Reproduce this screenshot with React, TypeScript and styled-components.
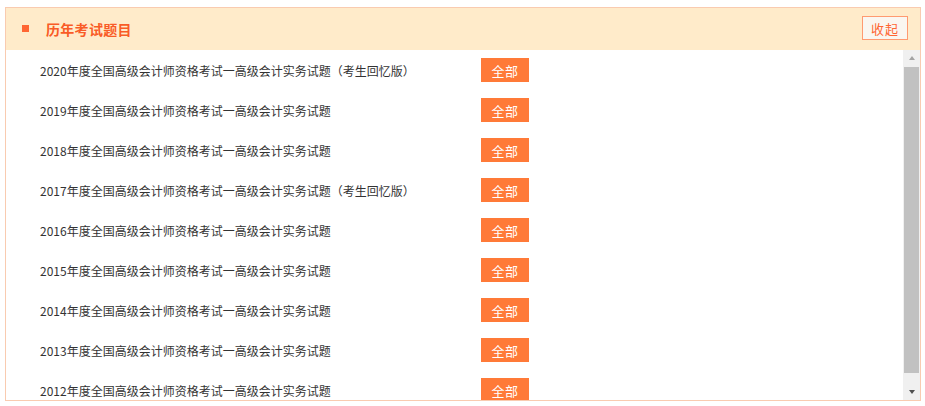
import React from "react";
import styled, { createGlobalStyle } from "styled-components";

const Global = createGlobalStyle`
  html, body { margin: 0; padding: 0; background: #fff; }
  body { font-family: "Noto Sans CJK SC", "Liberation Sans", sans-serif; }
`;

const Page = styled.div`
  padding: 7px 4px 0 5px;
`;

const Panel = styled.section`
  width: 914px;
  height: 392px;
  border: 1px solid #f9cbb0;
  display: flex;
  flex-direction: column;
  background: #fff;
`;

const Header = styled.header`
  height: 42px;
  flex: none;
  background: #ffebca;
  display: flex;
  align-items: center;
  padding: 0 12px 0 16px;
`;

const Marker = styled.span`
  width: 7px;
  height: 7px;
  background: #ff6633;
  margin-right: 17px;
  margin-top: -1px;
`;

const Title = styled.h2`
  margin: 0;
  font-size: 14px;
  font-weight: bold;
  color: #f95b26;
  flex: 1;
  letter-spacing: 0.3px;
`;

const CollapseButton = styled.button`
  width: 46px;
  height: 24px;
  border: 1px solid #ff9a70;
  background: #faf6f0;
  color: #ff6633;
  font-family: inherit;
  font-size: 13px;
  padding: 0;
  cursor: pointer;
  margin-top: -2px;
  letter-spacing: 1px;
`;

const Body = styled.div`
  flex: 1;
  display: flex;
  min-height: 0;
`;

const List = styled.ul`
  list-style: none;
  margin: 0;
  padding: 0;
  flex: 1;
  overflow: hidden;
`;

const Row = styled.li`
  height: 40px;
  display: flex;
  align-items: center;
  padding-left: 34px;
`;

const Name = styled.span`
  width: 441px;
  flex: none;
  font-size: 12px;
  color: #333;
  white-space: nowrap;
`;

const AllButton = styled.a`
  width: 48px;
  height: 24px;
  background: #ff7a38;
  color: #fff;
  font-size: 13px;
  display: flex;
  align-items: center;
  justify-content: center;
  text-decoration: none;
  letter-spacing: 0.5px;
  cursor: pointer;
`;

const ScrollBar = styled.div`
  width: 17px;
  flex: none;
  background: #f0f0f0;
  display: flex;
  flex-direction: column;
  align-items: center;
`;

const ArrowButton = styled.div<{ $down?: boolean }>`
  height: 17px;
  width: 17px;
  flex: none;
  display: flex;
  align-items: center;
  justify-content: center;
  margin-top: ${(p) => (p.$down ? "auto" : "0")};

  &::before {
    content: "";
    width: 0;
    height: 0;
    border-left: 3.5px solid transparent;
    border-right: 3.5px solid transparent;
    ${(p) =>
      p.$down
        ? "border-top: 4px solid #505050; margin-top: 0px;"
        : "border-bottom: 4px solid #a3a3a3; margin-top: -2px;"}
  }
`;

const Thumb = styled.div`
  width: 15px;
  height: 306px;
  flex: none;
  background: #c1c1c1;
`;

const base = "年度全国高级会计师资格考试一高级会计实务试题";
const items = [
  { year: 2020, memo: true },
  { year: 2019, memo: false },
  { year: 2018, memo: false },
  { year: 2017, memo: true },
  { year: 2016, memo: false },
  { year: 2015, memo: false },
  { year: 2014, memo: false },
  { year: 2013, memo: false },
  { year: 2012, memo: false },
];

export default function App() {
  return (
    <>
      <Global />
      <Page>
        <Panel>
          <Header>
            <Marker />
            <Title>历年考试题目</Title>
            <CollapseButton>收起</CollapseButton>
          </Header>
          <Body>
            <List>
              {items.map((it) => (
                <Row key={it.year}>
                  <Name>
                    {it.year}
                    {base}
                    {it.memo ? "（考生回忆版）" : ""}
                  </Name>
                  <AllButton>全部</AllButton>
                </Row>
              ))}
            </List>
            <ScrollBar>
              <ArrowButton />
              <Thumb />
              <ArrowButton $down />
            </ScrollBar>
          </Body>
        </Panel>
      </Page>
    </>
  );
}
